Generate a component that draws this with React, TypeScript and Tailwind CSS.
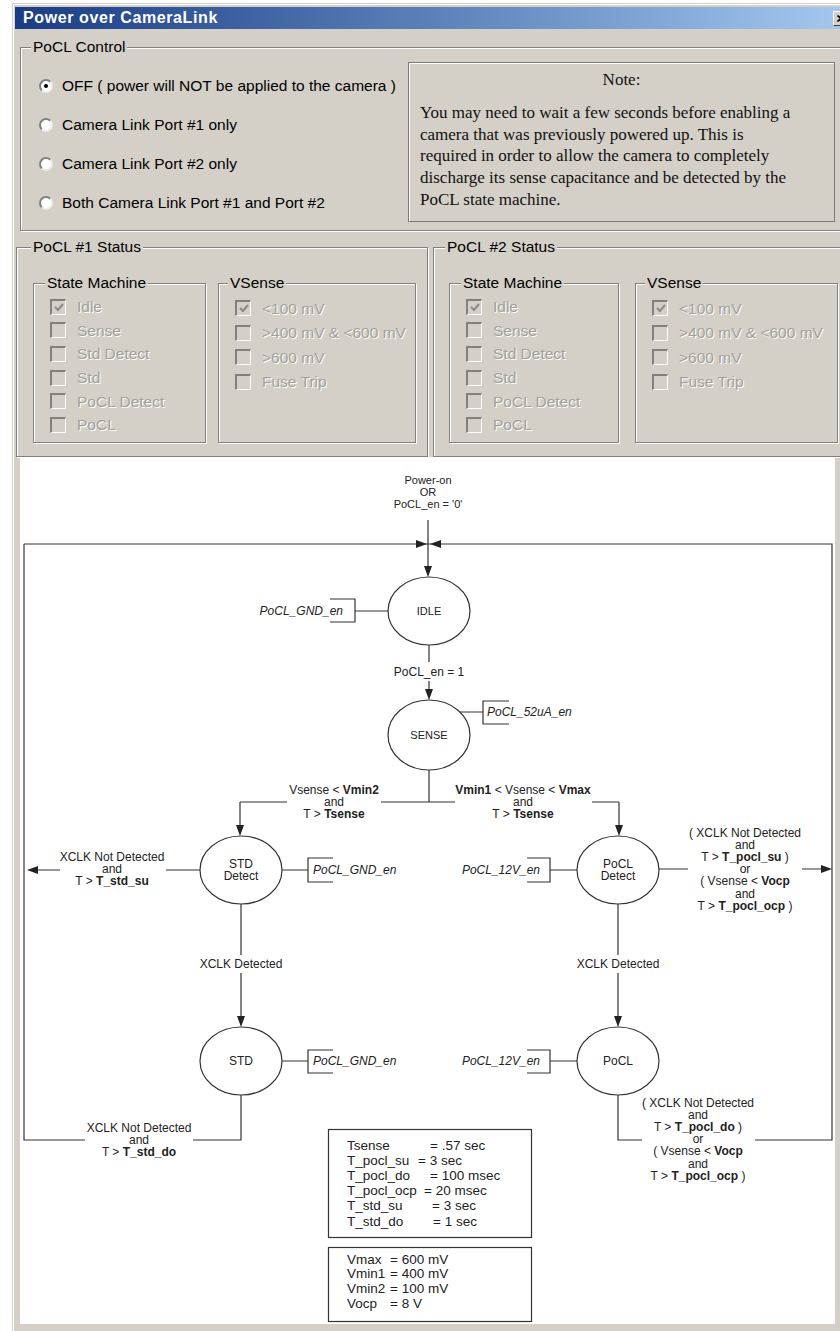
import type { ReactNode } from 'react'

const machineStates = ['Idle', 'Sense', 'Std Detect', 'Std', 'PoCL Detect', 'PoCL']
const senseStates = ['<100 mV', '>400 mV & <600 mV', '>600 mV', 'Fuse Trip']

const radioOptions = [
  'OFF ( power will NOT be applied to the camera )',
  'Camera Link Port #1 only',
  'Camera Link Port #2 only',
  'Both Camera Link Port #1 and Port #2',
]

function Radio({ label, checked }: { label: string; checked?: boolean }) {
  return (
    <div className="flex h-[39px] items-center gap-[9px]">
      <span className="flex h-[14px] w-[14px] items-center justify-center rounded-full border-2 border-t-[#808080] border-l-[#808080] border-r-[#ececec] border-b-[#ececec] bg-white">
        {checked && <span className="h-[4px] w-[4px] rounded-full bg-black" />}
      </span>
      <span className="text-black">{label}</span>
    </div>
  )
}

function Check({ label, checked, rowClass }: { label: string; checked?: boolean; rowClass: string }) {
  return (
    <div className={`flex items-center gap-[11px] ${rowClass}`}>
      <span className="flex h-[16px] w-[16px] flex-none items-center justify-center border-t-2 border-l-2 border-r border-b border-t-[#808080] border-l-[#808080] border-r-white border-b-white bg-[#d4d0c8]">
        {checked && (
          <svg width="10" height="9" viewBox="0 0 10 9">
            <polyline points="1,4 4,7 9,1" fill="none" stroke="#8a8a8a" strokeWidth="2" />
          </svg>
        )}
      </span>
      <span className="whitespace-nowrap text-[#a3a09a] [text-shadow:1px_1px_0_#fff]">{label}</span>
    </div>
  )
}

function Group({
  label,
  className,
  legendClass,
  children,
}: {
  label: string
  className: string
  legendClass: string
  children: ReactNode
}) {
  return (
    <fieldset className={`border border-[#808080] shadow-[inset_1px_1px_0_#fff,1px_1px_0_#fff] ${className}`}>
      <legend className={`bg-[#d4d0c8] px-[2px] leading-[18px] ${legendClass}`}>{label}</legend>
      {children}
    </fieldset>
  )
}

function StatusPanel({
  title,
  className,
  legendClass,
  padClass,
  machineClass,
  senseClass,
}: {
  title: string
  className: string
  legendClass: string
  padClass: string
  machineClass: string
  senseClass: string
}) {
  return (
    <Group label={title} className={className} legendClass={legendClass}>
      <div className={`flex pt-[18px] pb-[13px] ${padClass}`}>
        <Group label="State Machine" className={machineClass} legendClass="ml-[11px]">
          <div className="pt-[3px] pb-[5px] pl-[16px]">
            {machineStates.map((s, i) => (
              <Check key={s} label={s} checked={i === 0} rowClass="h-[23.6px]" />
            ))}
          </div>
        </Group>
        <Group label="VSense" className={senseClass} legendClass="ml-[9px]">
          <div className="pt-[4px] pl-[16px]">
            {senseStates.map((s, i) => (
              <Check key={s} label={s} checked={i === 0} rowClass="h-[24.5px]" />
            ))}
          </div>
        </Group>
      </div>
    </Group>
  )
}

// arrowheads, tip at (x, y)
const down = (x: number, y: number) => `${x},${y} ${x - 4},${y - 11} ${x + 4},${y - 11}`
const right = (x: number, y: number) => `${x},${y} ${x - 11},${y - 4} ${x - 11},${y + 4}`
const left = (x: number, y: number) => `${x},${y} ${x + 11},${y - 4} ${x + 11},${y + 4}`

function Lines({ x, y, lines }: { x: number; y: number; lines: ReactNode[] }) {
  return (
    <>
      {lines.map((l, i) => (
        <text key={i} x={x} y={y + i * 12.1} textAnchor="middle" dominantBaseline="central">
          {l}
        </text>
      ))}
    </>
  )
}

const B = ({ children }: { children: ReactNode }) => <tspan fontWeight="bold">{children}</tspan>

function Diagram() {
  const timings: [string, number, string][] = [
    ['Tsense', 430, '= .57 sec'],
    ['T_pocl_su', 418, '= 3 sec'],
    ['T_pocl_do', 430, '= 100 msec'],
    ['T_pocl_ocp', 424, '= 20 msec'],
    ['T_std_su', 432, '= 3 sec'],
    ['T_std_do', 433, '= 1 sec'],
  ]
  const volts: [string, string][] = [
    ['Vmax', '= 600 mV'],
    ['Vmin1', '= 400 mV'],
    ['Vmin2', '= 100 mV'],
    ['Vocp', '= 8 V'],
  ]

  return (
    <svg
      width={815}
      height={867}
      viewBox="20 457 815 867"
      className="block"
      fontFamily="'Liberation Sans', Arial, sans-serif"
      fontSize={12}
      fill="#222"
    >
      <g stroke="#333" strokeWidth={1.2} fill="none">
        {/* outer loop */}
        <path d="M24 544 H832 V1140 H755" />
        <path d="M642 1140 H618 V1095" />
        <path d="M241 1095 V1140 H193" />
        <path d="M85 1140 H24 V544" />

        <path d="M428 520 V567" />
        <ellipse cx={429} cy={611} rx={41} ry={34} />
        <path d="M330 599 H355 V622 H330 M355 611 H388" />
        <path d="M429 645 V662 M429 681 V690" />

        <ellipse cx={429} cy={735} rx={41} ry={35} />
        <path d="M460 712 H483 M509 701 H483 V724 H509" />

        <path d="M429 770 V802 M240 802 H287 M381 802 H455 M592 802 H619 M240 802 V826 M619 802 V826" />

        <ellipse cx={241} cy={870} rx={41} ry={34} />
        <path d="M200 870 H166 M60 870 H37" />
        <path d="M282 870 H308 M333 858 H308 V882 H333" />

        <ellipse cx={618} cy={870} rx={41} ry={34} />
        <path d="M577 870 H550 M527 858 H550 V882 H527" />
        <path d="M659 869 H688 M802 869 H822" />

        <path d="M241 904 V955 M241 973 V1017 M618 904 V955 M618 973 V1017" />

        <ellipse cx={241} cy={1061} rx={41} ry={34} />
        <path d="M282 1061 H308 M333 1050 H308 V1073 H333" />
        <ellipse cx={618} cy={1061} rx={41} ry={34} />
        <path d="M577 1061 H550 M527 1050 H550 V1073 H527" />

        <rect x={328.5} y={1129.5} width={203} height={108} />
        <rect x={328.5} y={1247.5} width={203} height={74} />
      </g>

      <g fill="#222">
        <polygon points={down(428, 577)} />
        <polygon points={right(427, 544)} />
        <polygon points={left(430, 544)} />
        <polygon points={down(429, 700)} />
        <polygon points={down(240, 836)} />
        <polygon points={down(619, 836)} />
        <polygon points={left(27, 870)} />
        <polygon points={right(832, 869)} />
        <polygon points={down(241, 1027)} />
        <polygon points={down(618, 1027)} />
      </g>

      <g fontSize={11}>
        <Lines x={428} y={480} lines={['Power-on', 'OR', "PoCL_en = '0'"]} />
      </g>

      <text x={429} y={611} textAnchor="middle" dominantBaseline="central" fontSize={11}>IDLE</text>
      <text x={343} y={611} textAnchor="end" dominantBaseline="central" fontStyle="italic">PoCL_GND_en</text>
      <text x={429} y={672} textAnchor="middle" dominantBaseline="central">PoCL_en = 1</text>
      <text x={429} y={735} textAnchor="middle" dominantBaseline="central" fontSize={11}>SENSE</text>
      <text x={487} y={712} dominantBaseline="central" fontStyle="italic">PoCL_52uA_en</text>

      <Lines
        x={334}
        y={790}
        lines={[
          <>Vsense &lt; <B>Vmin2</B></>,
          'and',
          <>T &gt; <B>Tsense</B></>,
        ]}
      />
      <Lines
        x={523}
        y={790}
        lines={[
          <><B>Vmin1</B> &lt; Vsense &lt; <B>Vmax</B></>,
          'and',
          <>T &gt; <B>Tsense</B></>,
        ]}
      />

      <Lines x={241} y={864} lines={['STD', 'Detect']} />
      <Lines
        x={112}
        y={857}
        lines={['XCLK Not Detected', 'and', <>T &gt; <B>T_std_su</B></>]}
      />
      <text x={313} y={870} dominantBaseline="central" fontStyle="italic">PoCL_GND_en</text>

      <Lines x={618} y={864} lines={['PoCL', 'Detect']} />
      <text x={540} y={870} textAnchor="end" dominantBaseline="central" fontStyle="italic">PoCL_12V_en</text>
      <Lines
        x={745}
        y={833}
        lines={[
          '( XCLK Not Detected',
          'and',
          <>T &gt; <B>T_pocl_su</B> )</>,
          'or',
          <>( Vsense &lt; <B>Vocp</B></>,
          'and',
          <>T &gt; <B>T_pocl_ocp</B> )</>,
        ]}
      />

      <text x={241} y={964} textAnchor="middle" dominantBaseline="central">XCLK Detected</text>
      <text x={618} y={964} textAnchor="middle" dominantBaseline="central">XCLK Detected</text>

      <text x={241} y={1061} textAnchor="middle" dominantBaseline="central">STD</text>
      <text x={618} y={1061} textAnchor="middle" dominantBaseline="central">PoCL</text>
      <text x={313} y={1061} dominantBaseline="central" fontStyle="italic">PoCL_GND_en</text>
      <text x={540} y={1061} textAnchor="end" dominantBaseline="central" fontStyle="italic">PoCL_12V_en</text>

      <Lines
        x={139}
        y={1128}
        lines={['XCLK Not Detected', 'and', <>T &gt; <B>T_std_do</B></>]}
      />
      <Lines
        x={698}
        y={1103}
        lines={[
          '( XCLK Not Detected',
          'and',
          <>T &gt; <B>T_pocl_do</B> )</>,
          'or',
          <>( Vsense &lt; <B>Vocp</B></>,
          'and',
          <>T &gt; <B>T_pocl_ocp</B> )</>,
        ]}
      />

      <g fontSize={13.5}>
        {timings.map(([name, eq, val], i) => (
          <g key={name}>
            <text x={347} y={1145 + i * 15.2} dominantBaseline="central">{name}</text>
            <text x={eq} y={1145 + i * 15.2} dominantBaseline="central">{val}</text>
          </g>
        ))}
        {volts.map(([name, val], i) => (
          <g key={name}>
            <text x={347} y={1259 + i * 14.8} dominantBaseline="central">{name}</text>
            <text x={390} y={1259 + i * 14.8} dominantBaseline="central">{val}</text>
          </g>
        ))}
      </g>
    </svg>
  )
}

export default function App() {
  return (
    <div className="h-[1331px] w-[840px] overflow-hidden bg-white pt-[3px] pl-[12px] font-['Liberation_Sans',Arial,sans-serif] text-[15.5px]">
      <div className="h-[1340px] w-[842px] border-t border-l border-[#d4d0c8] bg-[#d4d0c8] pt-[3px] pl-[2px] shadow-[inset_1px_1px_0_#fff]">
        {/* Title bar */}
        <div className="flex h-[22px] items-center justify-between bg-gradient-to-r from-[#1a3c84] to-[#a6caf0] pl-[8px] pr-[5px]">
          <span className="text-[16px] font-bold tracking-[0.6px] text-white">Power over CameraLink</span>
          <span className="flex h-[15px] w-[16px] items-center justify-center border-t border-l border-t-white border-l-white border-r border-b border-r-[#404040] border-b-[#404040] bg-[#d4d0c8]">
            <svg width="8" height="7" viewBox="0 0 8 7">
              <path d="M0.5 0.5 L7.5 6.5 M7.5 0.5 L0.5 6.5" stroke="#000" strokeWidth="1.6" />
            </svg>
          </span>
        </div>

        {/* PoCL Control */}
        <Group label="PoCL Control" className="mt-[9px] ml-[5px] w-[826px]" legendClass="ml-[10px]">
          <div className="flex pb-[8px]">
            <div className="w-[387px] flex-none pt-[10px] pl-[18px]">
              {radioOptions.map((o, i) => (
                <Radio key={o} label={o} checked={i === 0} />
              ))}
            </div>
            <div className="mt-[6px] h-[160px] w-[427px] flex-none border border-[#7a7a7a] px-[11px] pt-[6px] font-['Liberation_Serif',serif] text-[17px] leading-[21.75px] text-[#111] shadow-[inset_1px_1px_0_#fff]">
              <div className="text-center">Note:</div>
              <p className="mt-[11px] whitespace-nowrap">
                You may need to wait a few seconds before enabling a<br />
                camera that was previously powered up. This is<br />
                required in order to allow the camera to completely<br />
                discharge its sense capacitance and be detected by the<br />
                PoCL state machine.
              </p>
            </div>
          </div>
        </Group>

        {/* Status panels */}
        <div className="mt-[7px] ml-[1px] flex gap-[5px]">
          <StatusPanel
            title="PoCL #1 Status"
            className="w-[412px] flex-none"
            legendClass="ml-[14px]"
            padClass="gap-[12px] pl-[16px]"
            machineClass="w-[173px] flex-none"
            senseClass="w-[198px] flex-none"
          />
          <StatusPanel
            title="PoCL #2 Status"
            className="w-[420px] flex-none"
            legendClass="ml-[11px]"
            padClass="gap-[16px] pl-[15px]"
            machineClass="w-[170px] flex-none"
            senseClass="w-[203px] flex-none"
          />
        </div>

        {/* State machine diagram */}
        <div className="ml-[5px] w-[815px] bg-white">
          <Diagram />
        </div>
      </div>
    </div>
  )
}
